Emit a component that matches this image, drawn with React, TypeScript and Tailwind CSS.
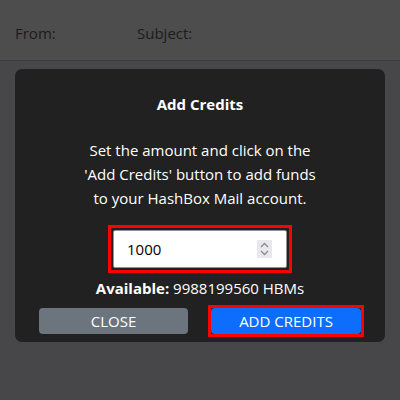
import { useState } from "react";

const font = { fontFamily: '"Open Sans", "Noto Sans", sans-serif' };

const Spinner = () => (
  <div className="flex h-[18px] w-[17px] flex-col items-center justify-center bg-[#e9e9ed]">
    <svg width="9" height="14" viewBox="0 0 9 14" fill="none" stroke="#8a8a90" strokeWidth="1.3">
      <path d="M1 5 L4.5 1.5 L8 5" />
      <path d="M1 9 L4.5 12.5 L8 9" />
    </svg>
  </div>
);

const App = () => {
  const [amount, setAmount] = useState("1000");

  return (
    <div className="flex h-[400px] w-[400px] flex-col bg-[#47474a] text-[15px]" style={font}>
      <header className="flex h-[61px] items-center border-b border-[#3d3d3f] bg-[#4d4d4d] px-[15px] pt-[6px] text-[#1c1c1c]">
        <span className="w-[122px]">From:</span>
        <span>Subject:</span>
      </header>

      <div className="mx-[15px] mt-[8px] flex h-[273px] flex-col items-center rounded-[7px] bg-[#212121] px-[24px] pt-[24px] text-white">
        <h2 className="text-[15px] font-bold leading-[22px]">Add Credits</h2>

        <p className="mt-[23px] text-center text-[15px] leading-[24px]">
          Set the amount and click on the
          <br />
          'Add Credits' button to add funds
          <br />
          to your HashBox Mail account.
        </p>

        <div className="mt-[15px] border-[3px] border-[#ff0000] p-[2px]">
          <div className="flex h-[38px] w-[174px] items-center rounded-[2px] border border-[#8f8f9d] bg-white pl-[13px] pr-[14px]">
            <input
              type="text"
              value={amount}
              onChange={(e) => setAmount(e.target.value)}
              className="w-full bg-transparent text-[15px] text-black outline-none"
              style={font}
            />
            <Spinner />
          </div>
        </div>

        <div className="mt-[4px] text-[15px] leading-[22px]">
          <span className="font-bold">Available:</span> 9988199560 HBMs
        </div>

        <div className="mt-[6px] flex w-full items-center justify-between pr-[-3px]">
          <button className="h-[26px] w-[149px] rounded-[4px] bg-[#6c757d] text-[15px] text-white">
            CLOSE
          </button>
          <div className="mr-[-3px] border-[3px] border-[#ff0000]">
            <button className="block h-[26px] w-[150px] rounded-[4px] bg-[#0d6efd] text-[15px] text-white">
              ADD CREDITS
            </button>
          </div>
        </div>
      </div>
    </div>
  );
};

export default App;
